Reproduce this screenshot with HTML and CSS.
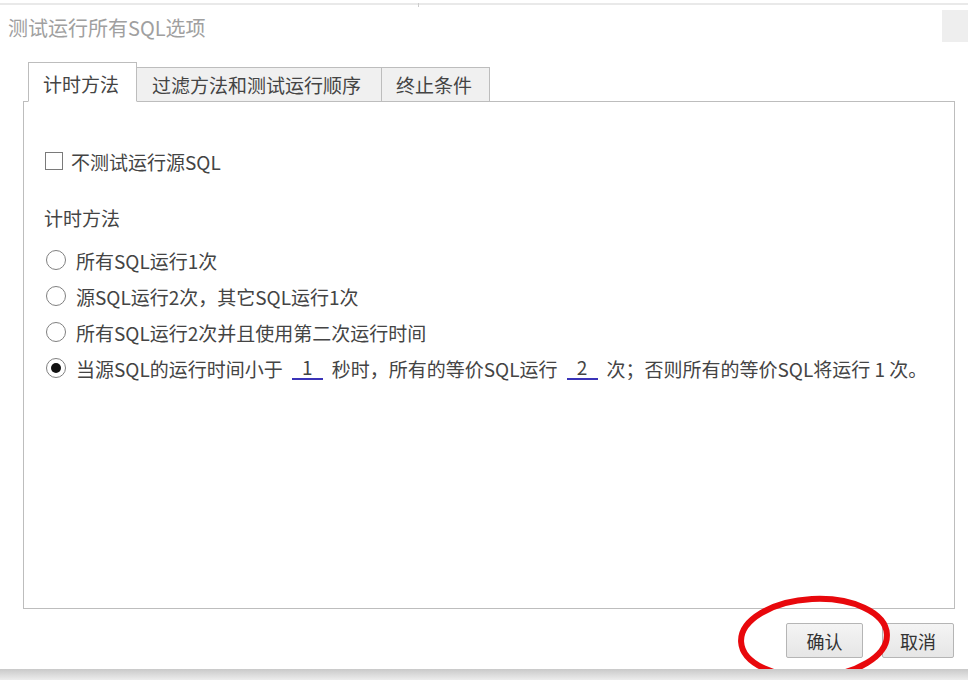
FILE: index.html
```html
<!DOCTYPE html>
<html lang="zh-CN">
<head>
    <meta charset="UTF-8">
    <meta name="viewport" content="width=device-width, initial-scale=1.0">
    <title>测试运行所有SQL选项</title>
    <link rel="stylesheet" href="styles.css">
</head>
<body>
    <div class="dialog">
        <div class="top-line"><span class="tick"></span></div>

        <div class="titlebar">
            <div class="title">测试运行所有SQL选项</div>
            <div class="close-box"></div>
        </div>

        <div class="tabs">
            <div class="tab active">计时方法</div>
            <div class="tab">过滤方法和测试运行顺序</div>
            <div class="tab">终止条件</div>
        </div>

        <div class="panel">
            <label class="check-row">
                <span class="checkbox"></span>
                不测试运行源SQL
            </label>

            <div class="group-title">计时方法</div>

            <div class="radio-list">
                <div class="radio-row"><span class="radio"></span>所有SQL运行1次</div>
                <div class="radio-row"><span class="radio"></span>源SQL运行2次，其它SQL运行1次</div>
                <div class="radio-row"><span class="radio"></span>所有SQL运行2次并且使用第二次运行时间</div>
                <div class="radio-row">
                    <span class="radio checked"></span>当源SQL的运行时间小于<span class="blank">1</span>秒时，所有的等价SQL运行<span class="blank">2</span>次；否则所有的等价SQL将运行 1 次。
                </div>
            </div>
        </div>

        <div class="footer">
            <button class="btn">确认</button>
            <button class="btn">取消</button>
        </div>

        <svg class="mark" width="170" height="100" viewBox="0 0 170 100">
            <ellipse cx="85" cy="51" rx="73" ry="39" fill="none" stroke="#e8080c" stroke-width="6" transform="rotate(-3 85 51)"/>
        </svg>

        <div class="bottom-shadow"></div>
    </div>
</body>
</html>
```

FILE: styles.css
```css
* {
    margin: 0;
    padding: 0;
    box-sizing: border-box;
}

body {
    background: #fff;
    font-family: "Noto Sans CJK SC", "Noto Sans", sans-serif;
    color: #444;
    width: 968px;
    height: 680px;
    overflow: hidden;
}

.dialog {
    position: relative;
    height: 680px;
}

.top-line {
    position: relative;
    height: 5px;
    border-top: 3px solid #fff;
    background: #e9e9e9;
    margin-bottom: 1px;
}

.tick {
    position: absolute;
    left: 418px;
    top: 0;
    width: 1px;
    height: 4px;
    background: #ccc;
}

.titlebar {
    display: flex;
    justify-content: space-between;
    height: 56px;
}

.title {
    padding: 10px 0 0 8px;
    font-size: 20px;
    line-height: 24px;
    color: #a0a0a0;
}

.close-box {
    width: 26px;
    height: 32px;
    margin-top: 4px;
    background: #eeeeee;
}

.tabs {
    display: flex;
    align-items: flex-end;
    margin-left: 28px;
    position: relative;
    z-index: 1;
    margin-bottom: -1px;
}

.tab {
    height: 35px;
    padding: 0 15px;
    font-size: 19px;
    line-height: 33px;
    color: #444;
    background: #f0f0f0;
    border: 1px solid #bdbdbd;
    border-left: 0;
    white-space: nowrap;
}

.tab.active {
    height: 40px;
    width: 109px;
    line-height: 42px;
    padding: 0 0 0 14px;
    background: #fff;
    border-left: 1px solid #bdbdbd;
    border-bottom: 1px solid #fff;
}

.tab:nth-child(2) {
    width: 245px;
}

.tab:nth-child(3) {
    width: 108px;
    padding-left: 14px;
}

.panel {
    height: 508px;
    margin: 0 13px 0 23px;
    border: 1px solid #bdbdbd;
    padding: 47px 0 0 20px;
    font-size: 19px;
}

.check-row {
    display: flex;
    align-items: center;
    height: 24px;
}

.checkbox {
    width: 18px;
    height: 18px;
    border: 1px solid #7a7a7a;
    margin: 0 8px 0 1px;
    background: #fff;
}

.group-title {
    margin-top: 33px;
    height: 24px;
    line-height: 24px;
}

.radio-list {
    margin-top: 12px;
}

.radio-row {
    display: flex;
    align-items: center;
    height: 36px;
    white-space: nowrap;
}

.radio {
    width: 20px;
    height: 20px;
    border: 1px solid #808080;
    border-radius: 50%;
    margin: 0 10px 0 2px;
    position: relative;
    flex: none;
}

.radio.checked::after {
    content: "";
    position: absolute;
    left: 4px;
    top: 4px;
    width: 10px;
    height: 10px;
    border-radius: 50%;
    background: #111;
}

.blank {
    display: inline-block;
    width: 31px;
    margin: 0 9px;
    text-align: center;
    line-height: 22px;
    border-bottom: 2px solid #3a33b8;
}

.footer {
    display: flex;
    justify-content: flex-end;
    gap: 19px;
    padding: 14px 14px 0 0;
    height: 61px;
}

.btn {
    width: 77px;
    height: 35px;
    font-family: inherit;
    font-size: 18px;
    color: #333;
    background: linear-gradient(#f4f4f4, #e6e6e6);
    border: 1px solid #b5b5b5;
    border-radius: 2px;
}

.btn + .btn {
    width: 72px;
}

.mark {
    position: absolute;
    left: 729px;
    top: 587px;
}

.bottom-shadow {
    position: absolute;
    left: 0;
    right: 0;
    bottom: 0;
    height: 11px;
    background: linear-gradient(#c9c9c9, #ececec);
}
```
